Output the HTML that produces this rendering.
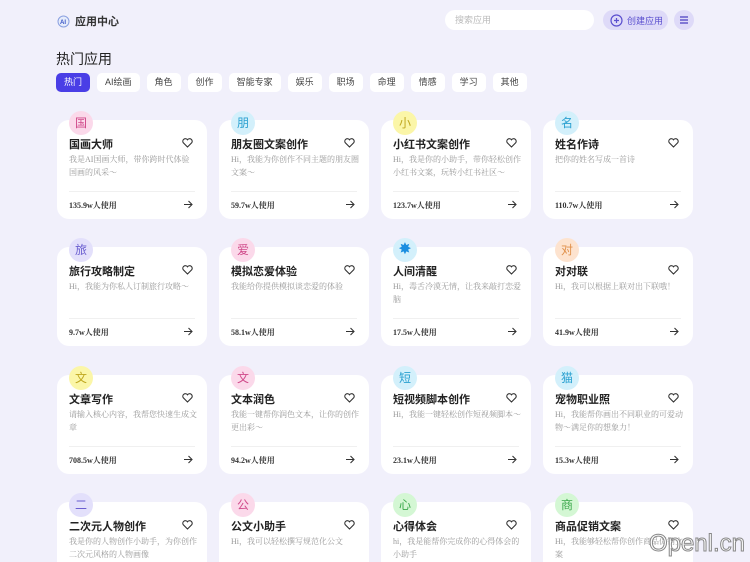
<!DOCTYPE html>
<html><head><meta charset="utf-8">
<style>
*{margin:0;padding:0;box-sizing:border-box}
html,body{width:750px;height:562px;overflow:hidden}
body{background:#f1f0fb;font-family:"Liberation Sans","Noto Sans CJK SC",sans-serif;position:relative;color:#222}
.logo{position:absolute;left:57px;top:13px;display:flex;align-items:center;gap:5px;font-size:11px;font-weight:bold;color:#333}
.search{position:absolute;left:445px;top:10px;width:149px;height:20px;background:#fff;border-radius:10px;font-size:9px;color:#bbb;padding:5px 10px;line-height:10px}
.create{position:absolute;left:603px;top:10px;width:65px;height:20px;background:#dedaf8;border-radius:10px;font-size:9px;color:#5b4fcf;display:flex;align-items:center;padding-left:7px;gap:4px}
.menu{position:absolute;left:674px;top:10px;width:20px;height:20px;border-radius:50%;background:#dedaf8}
.h1{position:absolute;left:56px;top:49px;font-size:14px;color:#222}
.tabs{position:absolute;left:56px;top:73px;display:flex;gap:7px}
.tab{height:19px;padding:0 8px;background:#fff;border-radius:5px;font-size:9px;line-height:19px;color:#444}
.tab.on{background:#4a3ee6;color:#fff}
.card{position:absolute;width:150px;height:99px;background:#fff;border-radius:12px}
.card.last{height:60px;border-radius:12px 12px 0 0}
.ic{position:absolute;left:12px;top:-9px;width:24px;height:24px;border-radius:50%;text-align:center;line-height:24px;font-size:12px}
.t{position:absolute;left:12px;top:16px;font-size:11px;font-weight:bold;color:#222}
.ht{position:absolute;right:14px;top:18px}
.d{position:absolute;left:12px;top:33px;width:128px;font-size:8px;line-height:13px;color:#999;font-family:"Liberation Serif","Noto Serif CJK SC",serif}
.ln{position:absolute;left:12px;right:12px;top:71px;border-top:1px solid #f0f0f0}
.u{position:absolute;left:12px;top:80px;font-size:8px;font-weight:bold;color:#333;font-family:"Liberation Serif","Noto Serif CJK SC",serif}
.ar{position:absolute;right:14px;top:80px}
.wm{position:absolute;right:5px;top:531px;font-size:24px;line-height:26px;color:#fff;-webkit-text-stroke:1px #888;font-family:"Liberation Sans",sans-serif}
</style></head><body>
<div class="logo"><svg width="13" height="13" viewBox="0 0 13 13"><circle cx="6.5" cy="6.5" r="5.5" fill="#e6ecfb" stroke="#8aa0e0" stroke-width="1"/><text x="3" y="9" font-size="6" font-weight="bold" fill="#3a56c8" font-family="Liberation Sans">AI</text></svg>应用中心</div>
<div class="search">搜索应用</div>
<div class="create"><svg width="13" height="13" viewBox="0 0 13 13"><circle cx="6.5" cy="6.5" r="5.5" fill="none" stroke="#5b4fcf" stroke-width="1.2"/><path d="M6.5 4v5M4 6.5h5" stroke="#5b4fcf" stroke-width="1.2"/></svg>创建应用</div>
<div class="menu"><svg width="20" height="20" viewBox="0 0 20 20"><path d="M6 7h8M6 10h8M6 13h8" stroke="#4a3ec0" stroke-width="1.3"/></svg></div>
<div class="h1">热门应用</div>
<div class="tabs"><div class="tab on">热门</div><div class="tab">AI绘画</div><div class="tab">角色</div><div class="tab">创作</div><div class="tab">智能专家</div><div class="tab">娱乐</div><div class="tab">职场</div><div class="tab">命理</div><div class="tab">情感</div><div class="tab">学习</div><div class="tab">其他</div></div>
<div class="card" style="left:57px;top:120px"><div class="ic" style="background:#fbd9ea;color:#d04a8a">国</div><div class="t">国画大师</div><svg class="ht" width="11" height="10" viewBox="0 0 11 10"><path d="M5.5 9L1.3 4.8A2.3 2.3 0 0 1 5.5 1.8A2.3 2.3 0 0 1 9.7 4.8Z" fill="none" stroke="#333" stroke-width="1.1"/></svg><div class="d">我是AI国画大师，带你跨时代体验国画的风采～</div><div class="ln"></div><div class="u">135.9w人使用</div><svg class="ar" width="10" height="9" viewBox="0 0 10 9"><path d="M1 4.5h8M5.5 1l3.5 3.5L5.5 8" fill="none" stroke="#333" stroke-width="1.1"/></svg></div>
<div class="card" style="left:219px;top:120px"><div class="ic" style="background:#d3f0fb;color:#2aa0d0">朋</div><div class="t">朋友圈文案创作</div><svg class="ht" width="11" height="10" viewBox="0 0 11 10"><path d="M5.5 9L1.3 4.8A2.3 2.3 0 0 1 5.5 1.8A2.3 2.3 0 0 1 9.7 4.8Z" fill="none" stroke="#333" stroke-width="1.1"/></svg><div class="d">Hi，我能为你创作不同主题的朋友圈文案～</div><div class="ln"></div><div class="u">59.7w人使用</div><svg class="ar" width="10" height="9" viewBox="0 0 10 9"><path d="M1 4.5h8M5.5 1l3.5 3.5L5.5 8" fill="none" stroke="#333" stroke-width="1.1"/></svg></div>
<div class="card" style="left:381px;top:120px"><div class="ic" style="background:#fbf6a8;color:#c0a820">小</div><div class="t">小红书文案创作</div><svg class="ht" width="11" height="10" viewBox="0 0 11 10"><path d="M5.5 9L1.3 4.8A2.3 2.3 0 0 1 5.5 1.8A2.3 2.3 0 0 1 9.7 4.8Z" fill="none" stroke="#333" stroke-width="1.1"/></svg><div class="d">Hi，我是你的小助手，带你轻松创作小红书文案，玩转小红书社区～</div><div class="ln"></div><div class="u">123.7w人使用</div><svg class="ar" width="10" height="9" viewBox="0 0 10 9"><path d="M1 4.5h8M5.5 1l3.5 3.5L5.5 8" fill="none" stroke="#333" stroke-width="1.1"/></svg></div>
<div class="card" style="left:543px;top:120px"><div class="ic" style="background:#d3f0fb;color:#2aa0d0">名</div><div class="t">姓名作诗</div><svg class="ht" width="11" height="10" viewBox="0 0 11 10"><path d="M5.5 9L1.3 4.8A2.3 2.3 0 0 1 5.5 1.8A2.3 2.3 0 0 1 9.7 4.8Z" fill="none" stroke="#333" stroke-width="1.1"/></svg><div class="d">把你的姓名写成一首诗</div><div class="ln"></div><div class="u">110.7w人使用</div><svg class="ar" width="10" height="9" viewBox="0 0 10 9"><path d="M1 4.5h8M5.5 1l3.5 3.5L5.5 8" fill="none" stroke="#333" stroke-width="1.1"/></svg></div>

<div class="card" style="left:57px;top:247px"><div class="ic" style="background:#e3e0fb;color:#6a5ed0">旅</div><div class="t">旅行攻略制定</div><svg class="ht" width="11" height="10" viewBox="0 0 11 10"><path d="M5.5 9L1.3 4.8A2.3 2.3 0 0 1 5.5 1.8A2.3 2.3 0 0 1 9.7 4.8Z" fill="none" stroke="#333" stroke-width="1.1"/></svg><div class="d">Hi，我能为你私人订制旅行攻略～</div><div class="ln"></div><div class="u">9.7w人使用</div><svg class="ar" width="10" height="9" viewBox="0 0 10 9"><path d="M1 4.5h8M5.5 1l3.5 3.5L5.5 8" fill="none" stroke="#333" stroke-width="1.1"/></svg></div>
<div class="card" style="left:219px;top:247px"><div class="ic" style="background:#fbd9ea;color:#d04a8a">爱</div><div class="t">模拟恋爱体验</div><svg class="ht" width="11" height="10" viewBox="0 0 11 10"><path d="M5.5 9L1.3 4.8A2.3 2.3 0 0 1 5.5 1.8A2.3 2.3 0 0 1 9.7 4.8Z" fill="none" stroke="#333" stroke-width="1.1"/></svg><div class="d">我能给你提供模拟谈恋爱的体验</div><div class="ln"></div><div class="u">58.1w人使用</div><svg class="ar" width="10" height="9" viewBox="0 0 10 9"><path d="M1 4.5h8M5.5 1l3.5 3.5L5.5 8" fill="none" stroke="#333" stroke-width="1.1"/></svg></div>
<div class="card" style="left:381px;top:247px"><div class="ic" style="background:#d3f0fb;color:#1a8ee0;font-size:16px">✸</div><div class="t">人间清醒</div><svg class="ht" width="11" height="10" viewBox="0 0 11 10"><path d="M5.5 9L1.3 4.8A2.3 2.3 0 0 1 5.5 1.8A2.3 2.3 0 0 1 9.7 4.8Z" fill="none" stroke="#333" stroke-width="1.1"/></svg><div class="d">Hi，毒舌冷漠无情，让我来敲打恋爱脑</div><div class="ln"></div><div class="u">17.5w人使用</div><svg class="ar" width="10" height="9" viewBox="0 0 10 9"><path d="M1 4.5h8M5.5 1l3.5 3.5L5.5 8" fill="none" stroke="#333" stroke-width="1.1"/></svg></div>
<div class="card" style="left:543px;top:247px"><div class="ic" style="background:#fde3cf;color:#e0904a">对</div><div class="t">对对联</div><svg class="ht" width="11" height="10" viewBox="0 0 11 10"><path d="M5.5 9L1.3 4.8A2.3 2.3 0 0 1 5.5 1.8A2.3 2.3 0 0 1 9.7 4.8Z" fill="none" stroke="#333" stroke-width="1.1"/></svg><div class="d">Hi，我可以根据上联对出下联哦！</div><div class="ln"></div><div class="u">41.9w人使用</div><svg class="ar" width="10" height="9" viewBox="0 0 10 9"><path d="M1 4.5h8M5.5 1l3.5 3.5L5.5 8" fill="none" stroke="#333" stroke-width="1.1"/></svg></div>

<div class="card" style="left:57px;top:375px"><div class="ic" style="background:#fbf6a8;color:#c0a820">文</div><div class="t">文章写作</div><svg class="ht" width="11" height="10" viewBox="0 0 11 10"><path d="M5.5 9L1.3 4.8A2.3 2.3 0 0 1 5.5 1.8A2.3 2.3 0 0 1 9.7 4.8Z" fill="none" stroke="#333" stroke-width="1.1"/></svg><div class="d">请输入核心内容，我帮您快速生成文章</div><div class="ln"></div><div class="u">708.5w人使用</div><svg class="ar" width="10" height="9" viewBox="0 0 10 9"><path d="M1 4.5h8M5.5 1l3.5 3.5L5.5 8" fill="none" stroke="#333" stroke-width="1.1"/></svg></div>
<div class="card" style="left:219px;top:375px"><div class="ic" style="background:#fbd9ea;color:#d04a8a">文</div><div class="t">文本润色</div><svg class="ht" width="11" height="10" viewBox="0 0 11 10"><path d="M5.5 9L1.3 4.8A2.3 2.3 0 0 1 5.5 1.8A2.3 2.3 0 0 1 9.7 4.8Z" fill="none" stroke="#333" stroke-width="1.1"/></svg><div class="d">我能一键帮你润色文本，让你的创作更出彩～</div><div class="ln"></div><div class="u">94.2w人使用</div><svg class="ar" width="10" height="9" viewBox="0 0 10 9"><path d="M1 4.5h8M5.5 1l3.5 3.5L5.5 8" fill="none" stroke="#333" stroke-width="1.1"/></svg></div>
<div class="card" style="left:381px;top:375px"><div class="ic" style="background:#d3f0fb;color:#2aa0d0">短</div><div class="t">短视频脚本创作</div><svg class="ht" width="11" height="10" viewBox="0 0 11 10"><path d="M5.5 9L1.3 4.8A2.3 2.3 0 0 1 5.5 1.8A2.3 2.3 0 0 1 9.7 4.8Z" fill="none" stroke="#333" stroke-width="1.1"/></svg><div class="d">Hi，我能一键轻松创作短视频脚本～</div><div class="ln"></div><div class="u">23.1w人使用</div><svg class="ar" width="10" height="9" viewBox="0 0 10 9"><path d="M1 4.5h8M5.5 1l3.5 3.5L5.5 8" fill="none" stroke="#333" stroke-width="1.1"/></svg></div>
<div class="card" style="left:543px;top:375px"><div class="ic" style="background:#d3f0fb;color:#2aa0d0">猫</div><div class="t">宠物职业照</div><svg class="ht" width="11" height="10" viewBox="0 0 11 10"><path d="M5.5 9L1.3 4.8A2.3 2.3 0 0 1 5.5 1.8A2.3 2.3 0 0 1 9.7 4.8Z" fill="none" stroke="#333" stroke-width="1.1"/></svg><div class="d">Hi，我能帮你画出不同职业的可爱动物～满足你的想象力！</div><div class="ln"></div><div class="u">15.3w人使用</div><svg class="ar" width="10" height="9" viewBox="0 0 10 9"><path d="M1 4.5h8M5.5 1l3.5 3.5L5.5 8" fill="none" stroke="#333" stroke-width="1.1"/></svg></div>

<div class="card last" style="left:57px;top:502px"><div class="ic" style="background:#e3e0fb;color:#6a5ed0">二</div><div class="t">二次元人物创作</div><svg class="ht" width="11" height="10" viewBox="0 0 11 10"><path d="M5.5 9L1.3 4.8A2.3 2.3 0 0 1 5.5 1.8A2.3 2.3 0 0 1 9.7 4.8Z" fill="none" stroke="#333" stroke-width="1.1"/></svg><div class="d">我是你的人物创作小助手，为你创作二次元风格的人物画像</div></div>
<div class="card last" style="left:219px;top:502px"><div class="ic" style="background:#fbd9ea;color:#d04a8a">公</div><div class="t">公文小助手</div><svg class="ht" width="11" height="10" viewBox="0 0 11 10"><path d="M5.5 9L1.3 4.8A2.3 2.3 0 0 1 5.5 1.8A2.3 2.3 0 0 1 9.7 4.8Z" fill="none" stroke="#333" stroke-width="1.1"/></svg><div class="d">Hi，我可以轻松撰写规范化公文</div></div>
<div class="card last" style="left:381px;top:502px"><div class="ic" style="background:#d4f7d4;color:#3aa84a">心</div><div class="t">心得体会</div><svg class="ht" width="11" height="10" viewBox="0 0 11 10"><path d="M5.5 9L1.3 4.8A2.3 2.3 0 0 1 5.5 1.8A2.3 2.3 0 0 1 9.7 4.8Z" fill="none" stroke="#333" stroke-width="1.1"/></svg><div class="d">hi，我是能帮你完成你的心得体会的小助手</div></div>
<div class="card last" style="left:543px;top:502px"><div class="ic" style="background:#d4f7d4;color:#3aa84a">商</div><div class="t">商品促销文案</div><svg class="ht" width="11" height="10" viewBox="0 0 11 10"><path d="M5.5 9L1.3 4.8A2.3 2.3 0 0 1 5.5 1.8A2.3 2.3 0 0 1 9.7 4.8Z" fill="none" stroke="#333" stroke-width="1.1"/></svg><div class="d">Hi，我能够轻松帮你创作商品促销文案</div></div>
<div class="wm">Openl.cn</div>
</body></html>
